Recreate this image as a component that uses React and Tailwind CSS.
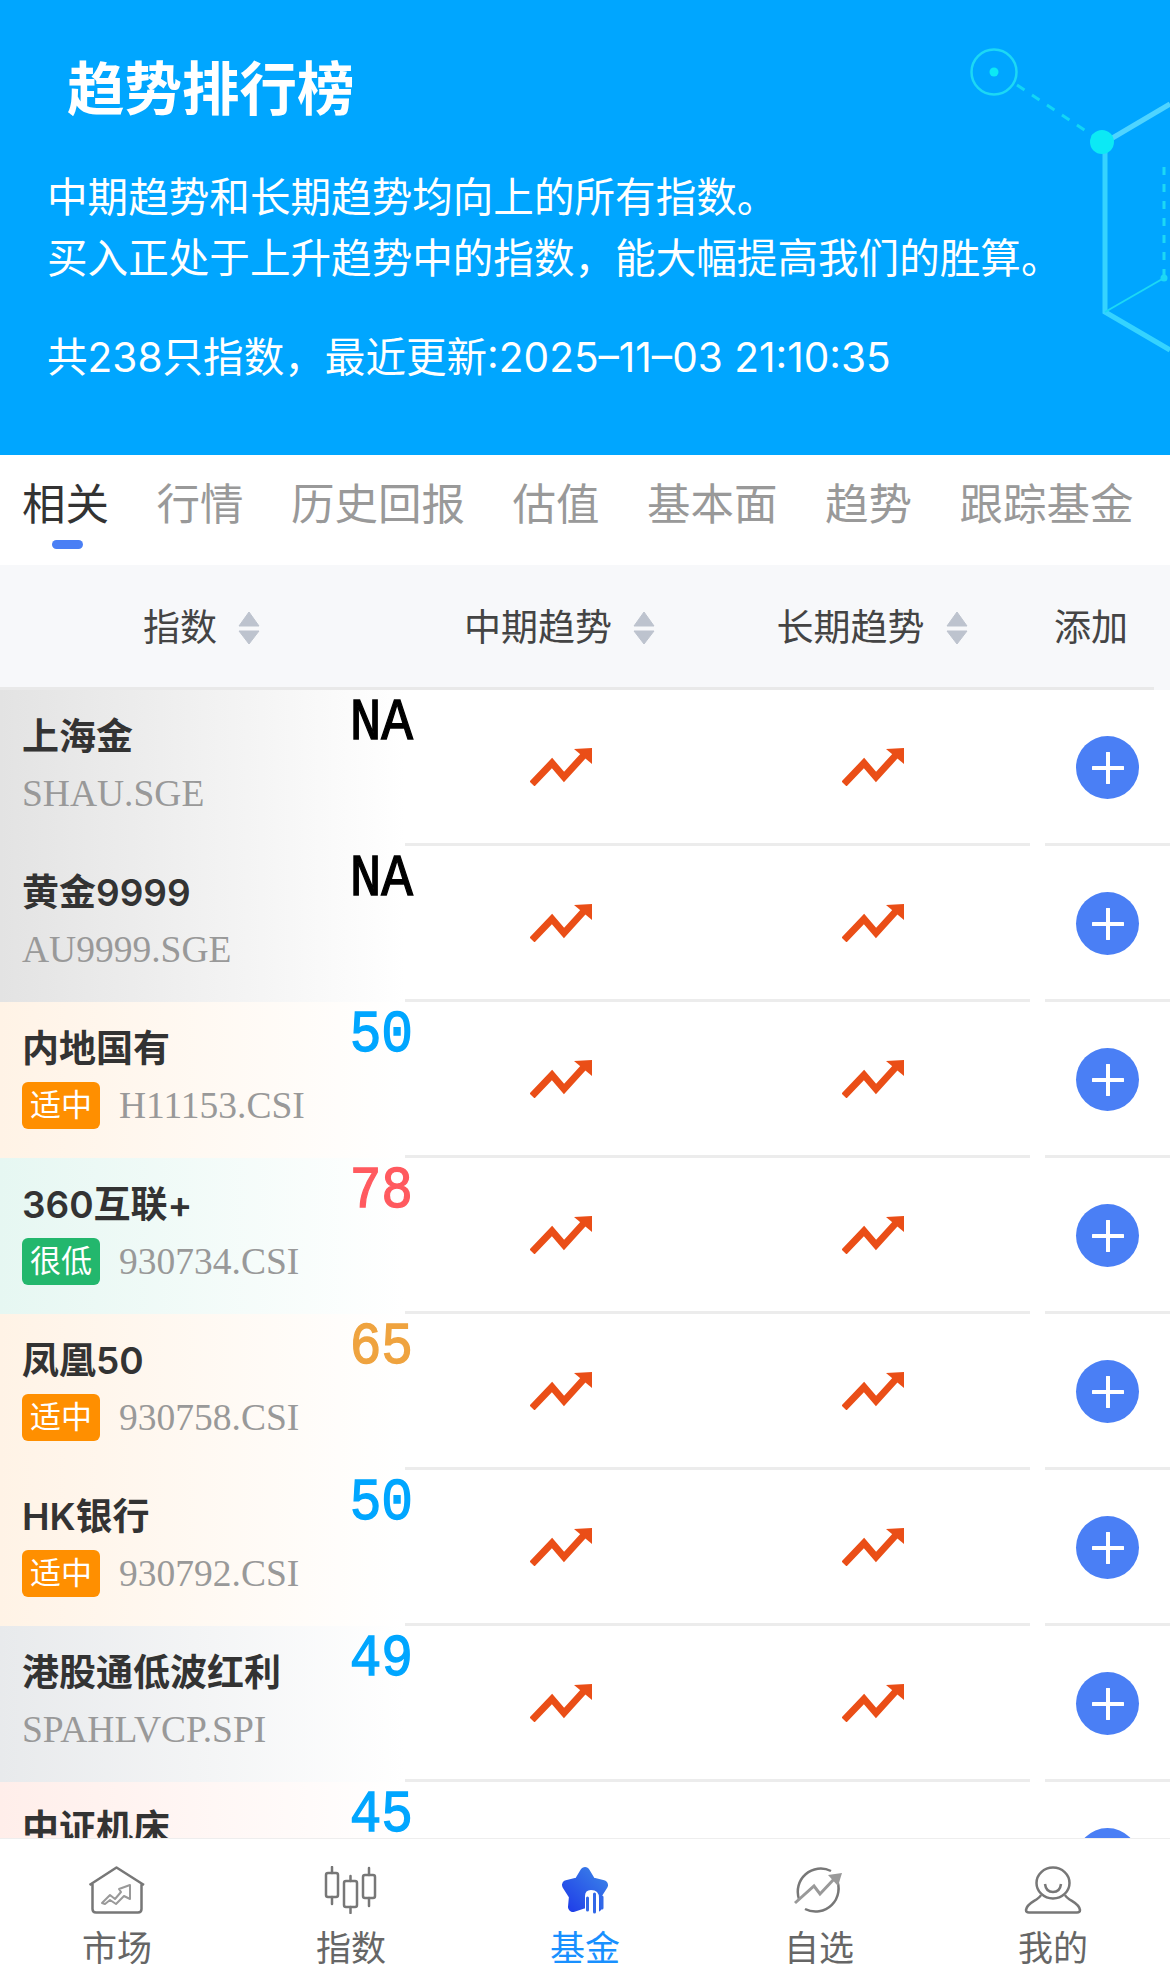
import React from 'react';

const rows = [
  { name: '上海金', code: 'SHAU.SGE', score: 'NA', scoreColor: 'text-black', bg: 'from-[#e3e3e3]' },
  { name: '黄金9999', code: 'AU9999.SGE', score: 'NA', scoreColor: 'text-black', bg: 'from-[#e3e3e3]' },
  { name: '内地国有', code: 'H11153.CSI', badge: '适中', score: '50', scoreColor: 'text-[#00a6ff]', bg: 'from-[#fff3e6]' },
  { name: '360互联+', code: '930734.CSI', badge: '很低', score: '78', scoreColor: 'text-[#ff5a5f]', bg: 'from-[#e6f7f2]' },
  { name: '凤凰50', code: '930758.CSI', badge: '适中', score: '65', scoreColor: 'text-[#efa33f]', bg: 'from-[#fff3e6]' },
  { name: 'HK银行', code: '930792.CSI', badge: '适中', score: '50', scoreColor: 'text-[#00a6ff]', bg: 'from-[#fff3e6]' },
  { name: '港股通低波红利', code: 'SPAHLVCP.SPI', score: '49', scoreColor: 'text-[#00a6ff]', bg: 'from-[#e8eaec]' },
  { name: '中证机床', code: '931866.CSI', badge: '适中', score: '45', scoreColor: 'text-[#00a6ff]', bg: 'from-[#ffeeea]' },
];

const tabs = ['相关', '行情', '历史回报', '估值', '基本面', '趋势', '跟踪基金'];

const SortIcon = () => (
  <svg width="22" height="34" viewBox="0 0 22 34" className="shrink-0">
    <path d="M11 1 L21 15 H1 Z" fill="#bdc3ce" stroke="#bdc3ce" strokeLinejoin="round" />
    <path d="M1 20 H21 L11 33 Z" fill="#bdc3ce" stroke="#bdc3ce" strokeLinejoin="round" />
  </svg>
);

const TrendIcon = () => (
  <svg width="62" height="38" viewBox="0 0 62 38">
    <path d="M2 36 L22 15 L34 29 L54 7" fill="none" stroke="#ea4e17" strokeWidth="7" />
    <path d="M44 1 L62 0 L62 16 Z" fill="#ea4e17" />
  </svg>
);

const PlusButton = () => (
  <div className="w-[63px] h-[63px] rounded-full bg-[#4a7ff5] flex items-center justify-center">
    <svg width="32" height="32" viewBox="0 0 32 32">
      <path d="M16 1 V31 M1 16 H31" stroke="white" strokeWidth="4" strokeLinecap="round" />
    </svg>
  </div>
);

const HouseIcon = () => (
  <svg width="58" height="48" viewBox="0 0 58 48" fill="none">
    <path d="M1.5 19 L28.500 1.500 L56 19 M4.500 18 V43 Q4.500 46.500 8 46.500 H50 Q53.500 46.500 53.500 43 V18" stroke="#777" strokeWidth="2.500" strokeLinejoin="round" />
    <path d="M14 37 L22 29 L27 33 L33 26 L31 23 L42 19 L42 33 L36 30 L28 38 L22 34 L17 38 Z" stroke="#999" strokeWidth="2" strokeLinejoin="round" />
  </svg>
);

const CandleIcon = () => (
  <svg width="54" height="48" viewBox="0 0 54 48" fill="none" stroke="#777" strokeWidth="2.500">
    <rect x="2" y="7" width="12" height="24" rx="2" />
    <path d="M8 1 V7 M8 31 V38" strokeLinecap="round" />
    <rect x="20" y="15" width="13" height="26" rx="2" />
    <path d="M26.500 10 V15 M26.500 41 V47" strokeLinecap="round" />
    <rect x="39" y="9" width="12" height="23" rx="2" />
    <path d="M45 2 V9 M45 32 V40" strokeLinecap="round" />
  </svg>
);

const StarIcon = () => (
  <svg width="48" height="48" viewBox="0 0 48 48" fill="none">
    <defs>
      <linearGradient id="starFill" x1="0" y1="1" x2="1" y2="0">
        <stop offset="0" stopColor="#2040e8" />
        <stop offset="1" stopColor="#3a80e8" />
      </linearGradient>
    </defs>
    <path d="M24 6 L30 16 L42 19 L35 30 L36 41 L24 37 L12 41 L13 30 L6 19 L18 16 Z" fill="url(#starFill)" stroke="url(#starFill)" strokeWidth="10" strokeLinejoin="round" />
    <path d="M24 47 V30 Q24 24 30 24 Q38 24 38 32 V47 H48 V47" fill="white" />
    <path d="M26.500 44 V32 M33.500 46 V28 M41 42 V31" stroke="#3268e8" strokeWidth="3" strokeLinecap="round" />
  </svg>
);

const WatchIcon = () => (
  <svg width="52" height="48" viewBox="0 0 52 48" fill="none">
    <path d="M6 33 A23 23 0 0 1 38 5 M43 12 A23 23 0 0 1 12 43" stroke="#777" strokeWidth="2.500" />
    <path d="M2 37 L21 20 L27 28 L42 12" stroke="#999" strokeWidth="3" />
    <path d="M35 9 L49 7 L45 20 Z" fill="#999" />
  </svg>
);

const PersonIcon = () => (
  <svg width="58" height="48" viewBox="0 0 58 48" fill="none" stroke="#777" strokeWidth="2.500">
    <ellipse cx="29" cy="17" rx="16.500" ry="15.500" />
    <path d="M21 18 Q22 26 29 26 Q36 26 37 18" />
    <path d="M17 29 C14 35 3 36 2 44 Q2 46.500 5 46.500 H53 Q56 46.500 56 44 C55 36 44 35 41 29" strokeLinejoin="round" />
  </svg>
);

const navItems = [
  { label: '市场', icon: <HouseIcon /> },
  { label: '指数', icon: <CandleIcon /> },
  { label: '基金', icon: <StarIcon />, active: true },
  { label: '自选', icon: <WatchIcon /> },
  { label: '我的', icon: <PersonIcon /> },
];

const HeaderArt = () => (
  <svg width="210" height="340" viewBox="960 20 210 340" fill="none" className="absolute right-0 top-[20px]">
    <circle cx="994" cy="72" r="22.500" stroke="#1cd8f5" strokeWidth="2.500" />
    <circle cx="994" cy="72" r="4.500" fill="#0ce9f5" />
    <path d="M1017 85 L1095 137" stroke="#12d6f5" strokeWidth="3" strokeDasharray="9 9" />
    <path d="M1104 143 L1170 104" stroke="#4fd4ff" strokeWidth="5" />
    <path d="M1105 150 V312 L1170 350" stroke="#35d3ff" strokeWidth="5" />
    <path d="M1105 312 L1164 278" stroke="#1cd8f5" strokeWidth="2" />
    <path d="M1164 167 V278" stroke="#1cd8f5" strokeWidth="3" strokeDasharray="8 9" />
    <circle cx="1164" cy="278" r="3.500" fill="#1cd8f5" />
    <circle cx="1102" cy="142" r="12" fill="#0ce9f5" />
  </svg>
);

const Row = ({ row }) => (
  <div className="flex h-[156px] shrink-0">
    <div className={`relative w-[405px] shrink-0 pl-[22px] pt-[21px] bg-gradient-to-r ${row.bg} to-white`}>
      <div className="h-[52px] leading-[52px] text-[37px] font-semibold text-[#333]">{row.name}</div>
      <div className="mt-[7px] h-[47px] flex items-center gap-[19px]">
        {row.badge && (
          <span className={`w-[78px] h-[47px] rounded-[6px] flex items-center justify-center text-[31px] text-white ${row.badge === '很低' ? 'bg-[#23b76d]' : 'bg-[#ff8f00]'}`}>
            {row.badge}
          </span>
        )}
        <span className="pt-[2px] font-['Liberation_Serif',serif] text-[37.5px] text-[#999]">{row.code}</span>
      </div>
      <span className={`absolute top-[1px] right-[-8px] h-[64px] leading-[64px] origin-right scale-x-[0.88] font-['Liberation_Mono',monospace] font-normal [-webkit-text-stroke:1.4px] text-[60px] ${row.scoreColor}`}>
        {row.score}
      </span>
    </div>
    <div className="w-[313px] shrink-0 pr-[2px] border-b-[3px] border-[#ececec] flex items-center justify-center">
      <TrendIcon />
    </div>
    <div className="w-[312px] shrink-0 pr-[2px] border-b-[3px] border-[#ececec] flex items-center justify-center">
      <TrendIcon />
    </div>
    <div className="ml-[15px] flex-1 pt-[2px] border-b-[3px] border-[#ececec] flex items-center justify-center">
      <PlusButton />
    </div>
  </div>
);

const App = () => {
  return (
    <div className="w-[1170px] h-[1987px] flex flex-col overflow-hidden bg-white font-['Inter','Noto_Sans_CJK_SC',sans-serif]">
      {/* top banner */}
      <div className="relative h-[455px] shrink-0 bg-[#00a6ff] text-white overflow-hidden">
        <HeaderArt />
        <h1 className="relative pl-[67px] pt-[54px] h-[122px] leading-[70px] text-[57.5px] font-bold">趋势排行榜</h1>
        <p className="relative pl-[47px] pt-[45px] text-[40.6px] leading-[61px]">
          中期趋势和长期趋势均向上的所有指数。
          <br />
          买入正处于上升趋势中的指数，能大幅提高我们的胜算。
        </p>
        <p className="relative pl-[47px] mt-[38px] text-[40.6px] leading-[61px]">共238只指数，最近更新:2025–11–03 21:10:35</p>
      </div>

      {/* tabs */}
      <div className="relative h-[110px] shrink-0 flex items-start pl-[22px] pt-[21px] gap-[47.5px] text-[43.5px] leading-[56px] text-[#999]">
        {tabs.map((tab, i) => (
          <div key={tab} className={i === 0 ? 'relative text-[#333]' : ''}>
            {tab}
            {i === 0 && <div className="absolute left-[30px] top-[64px] w-[31px] h-[9px] rounded-full bg-[#4a7ff5]" />}
          </div>
        ))}
      </div>

      {/* table head */}
      <div className="h-[125px] shrink-0 bg-[#f7f8fa]">
        <div className="w-[1154px] h-[125px] pt-[3px] flex border-b-[3px] border-[#e9e9e9] text-[37px] text-[#444]">
          <div className="w-[403px] flex items-center justify-center gap-[21px]">指数<SortIcon /></div>
          <div className="w-[313px] flex items-center justify-center gap-[21px]">中期趋势<SortIcon /></div>
          <div className="w-[312px] flex items-center justify-center gap-[21px]">长期趋势<SortIcon /></div>
          <div className="flex-1 flex items-center justify-center">添加</div>
        </div>
      </div>

      {/* list */}
      <div className="flex-1 min-h-0 overflow-hidden flex flex-col">
        {rows.map((row) => (
          <Row key={row.name} row={row} />
        ))}
      </div>

      {/* bottom nav */}
      <div className="h-[149px] shrink-0 bg-white border-t border-[#eeeeee] grid grid-cols-5 pt-[27px]">
        {navItems.map((item) => (
          <div key={item.label} className="flex flex-col items-center">
            <div className="h-[48px] flex items-center justify-center">{item.icon}</div>
            <div className={`mt-[9px] text-[35px] leading-[50px] ${item.active ? 'text-[#1890ff]' : 'text-[#666]'}`}>{item.label}</div>
          </div>
        ))}
      </div>
    </div>
  );
};

export default App;
